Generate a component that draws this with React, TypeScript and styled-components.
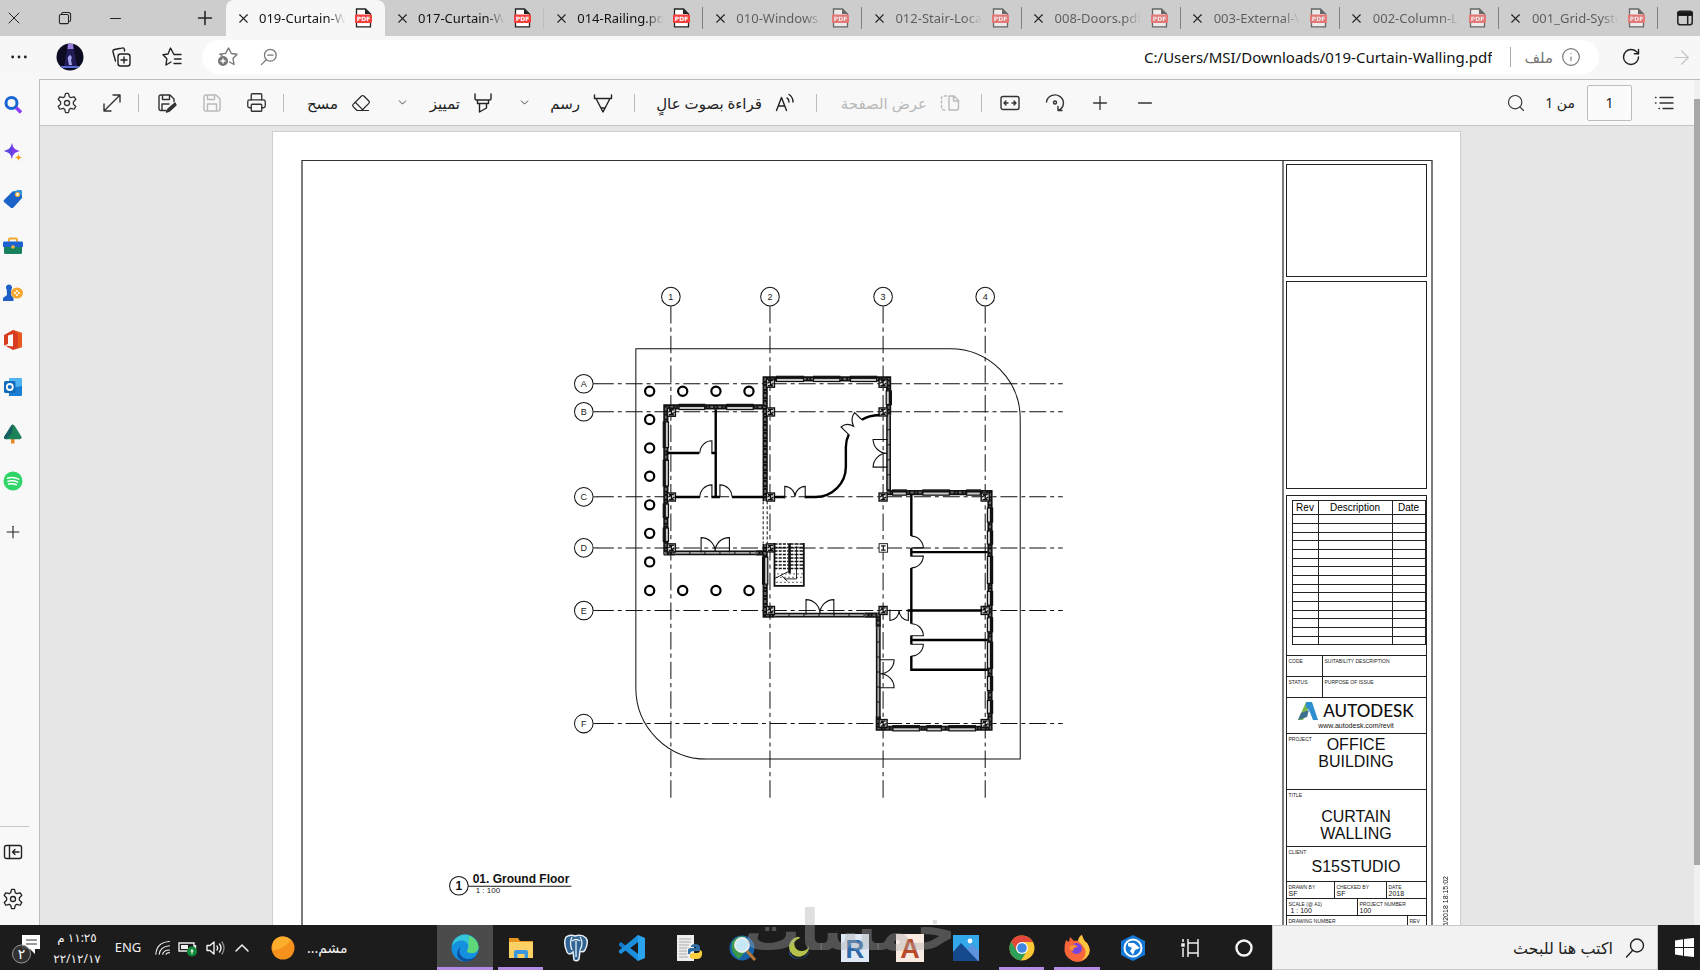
import React from "react";
import styled, { createGlobalStyle, css } from "styled-components";
import { X, Minus, Plus, Printer, Eraser, ChevronDown, ChevronUp, Search, Info, RotateCw, ArrowRight } from "lucide-react";

const GlobalStyle = createGlobalStyle`
  * { box-sizing: border-box; }
  body {
    margin: 0;
    overflow: hidden;
    background: #f7f7f7;
    font-family: "Noto Sans", "DejaVu Sans", sans-serif;
    color: #222;
  }
  button, input { font: inherit; color: inherit; }
  button { border: 0; padding: 0; background: none; }
`;

const Shell = styled.div`
  display: flex;
  flex-direction: column;
  height: 100vh;
  position: relative;
`;

/* ---------- tab strip ---------- */

const TabStrip = styled.header`
  display: flex;
  flex: none;
  height: 36px;
  background: #cdcdcd;
`;

const WindowControls = styled.div`
  display: flex;
  align-items: center;
  width: 226px;
  padding-right: 1px;
  overflow: hidden;
`;

const ControlButton = styled.button<{ $push?: boolean; $first?: boolean }>`
  display: grid;
  place-items: center;
  width: ${(p) => (p.$push ? 40 : 51)}px;
  height: 34px;
  flex: none;
  margin-left: ${(p) => (p.$push ? "auto" : p.$first ? "-12px" : "0")};
`;

const Tabs = styled.div`
  display: flex;
  flex: 1;
  min-width: 0;
`;

const Tab = styled.div<{ $active?: boolean; $asleep?: boolean; $divider?: "light" | "dark" }>`
  position: relative;
  display: flex;
  flex: 1;
  align-items: center;
  min-width: 0;
  padding: 0 13px 0 9px;
  gap: 8px;
  background: ${(p) => (p.$active ? "#f7f7f7" : "transparent")};
  border-radius: 8px 8px 0 0;
  ${(p) =>
    p.$divider &&
    css`
      &::after {
        content: "";
        position: absolute;
        right: 0;
        top: 7px;
        height: 22px;
        width: 1px;
        background: ${p.$divider === "dark" ? "#808080" : "#bdbdbd"};
      }
    `}
  span, svg.pdf { opacity: ${(p) => (p.$asleep ? 0.6 : 1)}; }
`;

const TabClose = styled.button`
  display: grid;
  place-items: center;
  width: 16px;
  height: 16px;
  flex: none;
`;

const TabLabel = styled.span`
  flex: 1;
  min-width: 0;
  overflow: hidden;
  white-space: nowrap;
  font-size: 13px;
  line-height: 20px;
  color: #111;
  mask-image: linear-gradient(90deg, #000 78%, transparent 98%);
`;

const TabMenu = styled.button`
  display: grid;
  place-items: center;
  width: 42px;
  padding-left: 12px;
`;

/* ---------- address bar ---------- */

const AddressRow = styled.div`
  display: flex;
  flex: none;
  align-items: center;
  height: 43px;
  padding-bottom: 1px;
  background: #f7f7f7;
`;

const AddressTools = styled.div<{ $width: number; $pull?: boolean }>`
  display: flex;
  flex: none;
  width: ${(p) => p.$width}px;
  padding-left: ${(p) => (p.$pull ? 0 : 6)}px;
  overflow: hidden;
  & > :first-child { margin-left: ${(p) => (p.$pull ? "-7px" : "0")}; }
`;

const AddressButton = styled.button<{ $faded?: boolean }>`
  display: grid;
  place-items: center;
  width: 51px;
  height: 34px;
  flex: none;
  color: ${(p) => (p.$faded ? "#c6c6c6" : "#222")};
`;

const AddressField = styled.div`
  display: flex;
  flex: 1;
  align-items: center;
  height: 34px;
  padding: 0 18px 0 12px;
  border-radius: 17px;
  background: #fff;
  color: #777;
`;

const FieldButton = styled.button`
  display: grid;
  place-items: center;
  width: 28px;
  height: 28px;
  margin-right: 13px;
`;

const UrlInput = styled.input`
  flex: 1;
  min-width: 0;
  border: 0;
  outline: 0;
  background: none;
  text-align: right;
  font-size: 15px;
  color: #111;
`;

const SchemeLabel = styled.span`
  display: flex;
  align-items: center;
  gap: 8px;
  margin-left: 16px;
  padding-left: 13px;
  border-left: 1px solid #aaa;
  font-size: 15px;
  line-height: 19px;
`;

/* ---------- body ---------- */

const Main = styled.div`
  display: flex;
  flex: 1;
  min-height: 0;
`;

const Sidebar = styled.nav`
  display: flex;
  flex: none;
  flex-direction: column;
  width: 39px;
  padding: 2px 0 3px;
  background: #f8f8f8;
`;

const SideButton = styled.button<{ $apart?: boolean }>`
  display: grid;
  place-items: center;
  width: 26px;
  height: 47px;
  flex: none;
  margin-top: ${(p) => (p.$apart ? 4 : 0)}px;
`;

const SideRule = styled.hr`
  width: 29px;
  margin: auto 0 1px;
  border: 0;
  border-top: 1px solid #c8c8c8;
`;

const Reader = styled.main`
  display: flex;
  flex: 1;
  min-width: 0;
  border: solid #bdbdbd;
  border-width: 1px 0 0 1px;
`;

const ReaderColumn = styled.div`
  display: flex;
  flex: 1;
  flex-direction: column;
  min-width: 0;
`;

const Toolbar = styled.div`
  display: flex;
  flex: none;
  align-items: center;
  height: 46px;
  padding: 0 8px 0 4px;
  border-bottom: 1px solid #c4c4c4;
  background: #f8f8f8;
`;

const ToolButton = styled.button<{ $faded?: boolean; $slim?: boolean }>`
  display: grid;
  place-items: center;
  width: ${(p) => (p.$slim ? 29 : 45)}px;
  height: 36px;
  flex: none;
  color: ${(p) => (p.$faded ? "#b9b9b9" : "#333")};
`;

const LabelTool = styled.button<{ $width: number; $faded?: boolean }>`
  display: flex;
  align-items: center;
  justify-content: flex-end;
  gap: 13px;
  width: ${(p) => p.$width}px;
  height: 36px;
  padding-right: 17px;
  flex: none;
  white-space: nowrap;
  font-size: 15px;
  color: ${(p) => (p.$faded ? "#b9b9b9" : "#222")};
`;

const ToolRule = styled.span`
  flex: none;
  width: 1px;
  height: 18px;
  margin: 0 5px 0 4px;
  background: #bcbcbc;
`;

const Spacer = styled.span`
  flex: 1;
`;

const PageCount = styled.label`
  display: flex;
  align-items: center;
  gap: 12px;
  margin: 0 9px 0 15px;
  font-size: 14px;
`;

const PageInput = styled.input`
  width: 45px;
  height: 36px;
  border: 1px solid #bdbdbd;
  border-radius: 2px;
  background: #fbfbfb;
  text-align: center;
`;

const Desk = styled.div`
  display: flex;
  flex: 1;
  justify-content: center;
  align-items: flex-start;
  min-height: 0;
  overflow: hidden;
  padding: 5px 2px 0 0;
  background: #e6e6e6;
`;

const ScrollTrack = styled.div`
  flex: none;
  width: 6px;
  padding-top: 19px;
  background: #f0f0f0;
`;

const ScrollThumb = styled.div`
  height: calc(100% - 60px);
  background: #a8a8a8;
`;

/* ---------- drawing sheet ---------- */

const Sheet = styled.article`
  display: flex;
  flex: none;
  width: 1189px;
  padding: 28px 0 28px 28px;
  border: 1px solid #cfcfcf;
  background: #fff;
  font-family: "Liberation Sans", Arial, sans-serif;
  color: #111;
`;

const Frame = styled.div`
  display: flex;
  flex: 1;
  border: 2px solid #7c7c7c;
  border-top: 1px solid #333;
`;

const PlanArea = styled.div`
  flex: 1;
  border-right: 2px solid #7c7c7c;
`;

const PlanSvg = styled.svg`
  display: block;
  width: 100%;
`;

const PrintStamp = styled.div`
  width: 27px;
  padding: 716px 0 0 9px;
  font-size: 7px;
  line-height: 8px;
  writing-mode: vertical-lr;
  white-space: nowrap;
  span { display: inline-block; transform: rotate(180deg); }
`;

const TitleBlock = styled.aside`
  display: flex;
  flex-direction: column;
  gap: 4px;
  width: 147px;
  padding: 3px 4px 3px 2px;
`;

const BlankBox = styled.div<{ $height: number }>`
  height: ${(p) => p.$height}px;
  border: 1px solid #222;
`;

const InfoBox = styled.div`
  margin-top: 2px;
  border: 1px solid #222;
`;

const RevTable = styled.table`
  width: 133px;
  margin: 4px 0 10px 5px;
  border-collapse: collapse;
  table-layout: fixed;
  font-size: 10px;
  line-height: 12px;
  th, td { padding: 0; border: 1px solid #222; }
  th { font-weight: 400; height: 14px; color: #000; }
  td { height: 9px; }
  tr:nth-child(3n) td { height: 8px; }
`;

const RevCol = styled.col<{ $width: number }>`
  width: ${(p) => p.$width}px;
`;

const BlockRow = styled.div<{ $height: number }>`
  display: flex;
  height: ${(p) => p.$height}px;
  border-top: 1px solid #222;
`;

const Cell = styled.div<{ $width?: number }>`
  ${(p) => (p.$width ? css`width: ${p.$width}px; flex: none;` : css`flex: 1;`)}
  padding: 2px 0 0 2px;
  font-size: 7px;
  line-height: 8px;
  & + & { border-left: 1px solid #222; }
`;

const Caption = styled.div`
  font-size: 5px;
  line-height: 6px;
  white-space: nowrap;
  color: #222;
`;

const BigText = styled.div<{ $drop?: number }>`
  margin-top: ${(p) => p.$drop ?? 0}px;
  padding-right: 2px;
  text-align: center;
  font-size: 16px;
  line-height: 17px;
`;

const Brand = styled.div`
  flex: 1;
  text-align: center;
  font-size: 7px;
  line-height: 9px;
`;

const BrandName = styled.div`
  display: flex;
  align-items: center;
  justify-content: center;
  gap: 5px;
  height: 23px;
  padding-top: 1px;
  font-family: Lato, sans-serif;
  font-size: 17px;
  font-weight: 500;
`;

/* ---------- taskbar ---------- */

const Taskbar = styled.footer`
  display: flex;
  flex: none;
  height: 45px;
  background: #1c1c1c;
  color: #f2f2f2;
`;

const Tray = styled.div`
  display: flex;
  align-items: center;
  width: 437px;
  padding-left: 6px;
`;

const TrayButton = styled.button<{ $width: number; $small?: boolean }>`
  display: grid;
  place-items: center;
  width: ${(p) => p.$width}px;
  height: 45px;
  flex: none;
  font-size: ${(p) => (p.$small ? 12 : 13)}px;
  line-height: 21px;
  white-space: nowrap;
`;

const Weather = styled.button`
  display: flex;
  align-items: center;
  gap: 12px;
  margin-left: 16px;
  font-size: 14px;
`;

const Apps = styled.div`
  display: flex;
  flex: 1;
`;

const AppButton = styled.button<{ $state?: "front" | "open" }>`
  position: relative;
  display: grid;
  place-items: center;
  flex: 1;
  background: ${(p) => (p.$state === "front" ? "#4b4b4b" : "none")};
  ${(p) =>
    p.$state &&
    css`
      &::after {
        content: "";
        position: absolute;
        bottom: 0;
        left: ${p.$state === "front" ? 0 : 5}px;
        right: ${p.$state === "front" ? 0 : 5}px;
        height: 3px;
        background: #b48be6;
      }
    `}
`;

const SearchBox = styled.label`
  display: flex;
  align-items: center;
  gap: 10px;
  width: 386px;
  padding-right: 12px;
  background: #f2f2f2;
  border: 1px solid #c8c8c8;
  color: #222;
`;

const SearchInput = styled.input`
  flex: 1;
  min-width: 0;
  border: 0;
  outline: 0;
  background: none;
  font-size: 16px;
  &::placeholder { color: #222; opacity: 1; }
`;

const StartButton = styled.button`
  display: grid;
  place-items: center;
  width: 42px;
  padding-left: 10px;
`;

const Watermark = styled.div`
  position: absolute;
  left: 50%;
  bottom: 6px;
  transform: translateX(-50%);
  font-family: "DejaVu Sans", sans-serif;
  font-size: 56px;
  font-weight: 700;
  line-height: 66px;
  color: rgba(170, 170, 170, 0.38);
  pointer-events: none;
  white-space: nowrap;
`;

/* ---------- icons ---------- */

type GlyphProps = { size?: number; width?: number; children: React.ReactNode };
const Glyph = ({ size = 20, width = 1.4, children }: GlyphProps) => (
  <svg width={size} height={size} viewBox="0 0 20 20" fill="none" stroke="currentColor" strokeWidth={width} strokeLinecap="round" strokeLinejoin="round">
    {children}
  </svg>
);

const GearIcon = () => (
  <Glyph size={22} width={1.2}>
    <path d="M8.3 2.6 8.7 1.3h2.6l.4 1.3.4 1.7 1.4.8 1.8-.5 1.3-.2 1.4 2.3-1 1-1.2 1.3v2l1.2 1.2 1 1-1.4 2.4-1.3-.3-1.8-.5-1.4.9-.4 1.7-.4 1.3H8.7l-.4-1.3-.4-1.7-1.4-.9-1.8.5-1.3.3L2 13.2l1-1L4.2 11V9L3 7.7l-1-1 1.4-2.3 1.3.2 1.8.5 1.4-.8Z" />
    <circle cx="10" cy="10" r="2.3" />
  </Glyph>
);

const PdfIcon = () => (
  <svg className="pdf" width="17" height="20" viewBox="0 0 17 20">
    <path d="M1.5 1h9l5 5v12.8h-14Z" fill="#fff" stroke="#222" strokeWidth="1.3" />
    <path d="M10 1v5h5.5Z" fill="#222" />
    <rect x="0" y="6.5" width="17" height="8.5" rx="1" fill="#f2403d" />
    <text x="8.5" y="13" textAnchor="middle" fontFamily="DejaVu Sans" fontSize="6" fontWeight="700" fill="#fff">PDF</text>
  </svg>
);

const sideIcons: [string, React.ReactNode][] = [
  ["Search", <><circle cx="8.5" cy="8" r="5.5" fill="none" stroke="#1766d6" strokeWidth="3" /><path d="m13 12.5 5 5" stroke="#8b3ff0" strokeWidth="3.6" /></>],
  ["Discover", <><path d="M9 1c1 5 2.5 6.5 8 8-5.5 1.5-7 3-8 8-1-5-2.5-6.5-8-8 5.5-1.5 7-3 8-8Z" fill="#7c3aed" /><path d="M9 1c-1 5-2.5 6.5-8 8 5.5 1.5 7 3 8 8Z" fill="#5b46e0" /><path d="M15.5 12c.5 2.3 1.2 3 3.5 3.5-2.3.5-3 1.2-3.5 3.5-.5-2.3-1.2-3-3.5-3.5 2.3-.5 3-1.2 3.5-3.5Z" fill="#f59e0b" /></>],
  ["Shopping", <><path d="m1 11 8.5-8.5 8-1.5 1.5 1v7l-8.5 9.5q-1.500 1-3 0L1 13q-1-1 0-2Z" fill="#1b62c9" /><path d="m9.5 2.5 8-1.5 1.5 1v5Z" fill="#2f93e0" /><circle cx="14.5" cy="5.5" r="2" fill="#fff" stroke="#e9a63a" strokeWidth="1.2" /></>],
  ["Tools", <><path d="M6 6V3.5q0-1 1-1h6q1 0 1 1V6" fill="none" stroke="#f0a72c" strokeWidth="1.8" /><rect x="1" y="9" width="18" height="9" rx="1.5" fill="#17805f" /><path d="M0 6.5q0-1 1-1h18q1 0 1 1V11H0Z" fill="#1c62d0" /><circle cx="10" cy="11" r="1.8" fill="#f6b73c" /></>],
  ["Games", <><path d="M6 1.5a3 3 0 0 1 2.3 5L8 12l2.5 3v3H0v-3l4-3-.3-5.500A3 3 0 0 1 6 1.5Z" fill="#1d5fc4" /><ellipse cx="14" cy="10" rx="6" ry="5.5" fill="#f6a62d" /><g fill="#fff"><circle cx="12" cy="10" r="1.1" /><circle cx="16" cy="10" r="1.1" /><circle cx="14" cy="8" r="1.1" /><circle cx="14" cy="12" r="1.1" /></g></>],
  ["Office", <><path d="m1 5 9-5 9 3v14l-9 3-8-4.5 8 1V4L5 5.5V14l-4 1.5Z" fill="#d83b1f" /><path d="M10 0 19 3v14l-4 1.5V4Z" fill="#e8591f" /></>],
  ["Outlook", <><rect x="6" y="1" width="13" height="17" rx="1" fill="#50b4f0" /><path d="m6 12 7-2 6-1v9q0 1-1 1H6Z" fill="#1a7fd4" /><rect x="1" y="4" width="11.5" height="12" rx="1.5" fill="#0f6cbd" /><circle cx="6.8" cy="10" r="3" fill="none" stroke="#fff" strokeWidth="1.8" /></>],
  ["Tree", <><rect x="8" y="14" width="3.5" height="5.5" fill="#e98a23" /><path d="M9.8.5q1 0 2 1.5l6.5 10.5q1 2.500-2 2.8H3.3q-3-.3-2-2.8L8 2q.8-1.5 1.8-1.5Z" fill="#1c8257" /><path d="M9.8.5q-1 0-1.8 1.5L1.3 12.5q-1 2.5 2 2.8L9 9Z" fill="#175f62" /></>],
  ["Music", <><circle cx="10" cy="10" r="9.5" fill="#2fd566" /><path d="M4.5 7.2q6-1.6 11.2 1M5 10.2q5-1.3 9.7.9M5.5 13q4-1 8 .8" fill="none" stroke="#fff" strokeWidth="1.5" strokeLinecap="round" /></>],
];

const appIcons: { name: string; state?: "front" | "open"; art: React.ReactNode }[] = [
  { name: "Edge", state: "front", art: <><circle cx="14" cy="14" r="13.5" fill="#1490df" /><path d="M2 8A13.5 13.5 0 0 1 27.5 13c0 4-3 6-7 6-3 0-4.5-1-4.5-2s1.5-1.5 1.5-4C17.5 9 14 6.5 10 6.5 6 6.5 3 9 .8 12Z" fill="#34c6d8" /><path d="M18 2q9 3 9.5 11c0 4-3 6-7 6-3 0-4.5-1-4.5-2s1.5-1.5 1.5-4Z" fill="#5fd879" /><path d="M10 13c-4 5 0 12 7 12 4 0 6-1.500 8.500-3.500C22 28 13 29.500 8 24.500 5 21 6 15.500 10 13Z" fill="#0c4f9f" /></> },
  { name: "Files", state: "open", art: <><path d="M2 4h9l2 3h13v5H2Z" fill="#e8951f" /><path d="M2 8h24v16H2Z" fill="#fbd065" /><path d="M7 24v-6q0-2 2-2h10q2 0 2 2v6h-3.5v-4h-7v4Z" fill="#3a97e0" /></> },
  { name: "Database", art: <><path d="M4 3q4-3 9-1 7-2 11 2 3 4-1 12-2 3-5 1l-1 8q-2 3-5 1l-1-8q-4 4-6 0Q1 9 4 3Z" fill="#2f6493" stroke="#e8eef4" strokeWidth="1.5" /><path d="M10 3q-3 6 0 13M18 3q4 6 0 13M10 7q4-3 8 0M14 7v16" fill="none" stroke="#e8eef4" strokeWidth="1.3" /></> },
  { name: "Code", art: <><path d="M20 1 27 4v20l-7 3Z" fill="#2aa4ee" /><path d="M20 1 8 12 3 8 1 9.5v2L20 27v-7L12 14l8-6Z" fill="#1177c8" /><path d="M20 27 8 16l-5 4-2-1.5v-2L20 1v7l-8 6 8 6Z" fill="#1c8fdc" /></> },
  { name: "Python", art: <><path d="M3 1h17v26H3Z" fill="#ededed" /><path d="M5 5h12M5 8h12M5 11h10M5 14h8M5 17h8M5 20h8M5 23h9" stroke="#aaa" /><path d="M21 10q5 0 5 4v3h-6q-4 0-4 3h-2v-4q0-2 3-2h5v-1h-5q0-3 4-3Z" fill="#2d6ea5" /><path d="M20 25q-5 0-4-4 0-2 3-2h4q3 0 3-3 3 1 2 5t-5 4Z" fill="#fbcf3c" /></> },
  { name: "Finder", art: <><circle cx="13" cy="14" r="12.5" fill="#1762a8" /><path d="M3 8q6-8 14-5l-3 5 4 8-8 9Q1 20 3 8Z" fill="#3c9a4c" /><circle cx="13" cy="11" r="7" fill="#c6e8f5" stroke="#ececec" strokeWidth="1.8" /><path d="m18 17 8 9" stroke="#b87736" strokeWidth="3" /></> },
  { name: "Crescent", art: <><path d="M4 15a10 10 0 0 0 20-1v4A11 10 0 0 1 4 20Z" fill="#1d4e8a" /><path d="M12 3A10 10 0 1 0 24 12 7.5 7 0 0 1 10 13Q7 7 15 4 14 2 12 3Z" fill="#b4c24c" /></> },
  { name: "Revit", art: <><rect x="0" y="0" width="28" height="28" fill="#dfe9f5" /><text x="14" y="23.5" textAnchor="middle" fontFamily="Liberation Sans" fontSize="26" fontWeight="700" fill="#2f69a9">R</text></> },
  { name: "AutoCAD", art: <><rect x="0" y="0" width="28" height="28" fill="#f9ebe2" /><text x="14" y="23.5" textAnchor="middle" fontFamily="Liberation Sans" fontSize="27" fontWeight="700" fill="#b84a2c">A</text></> },
  { name: "Photos", art: <><rect x="1" y="1" width="26" height="26" fill="#33a9ec" /><path d="m14 16 6-6 7 7v10H14Z" fill="#5d93dc" /><path d="M1 18 9 9l17 18H1Z" fill="#174a8c" /><circle cx="18" cy="7" r="2.4" fill="#fff" /></> },
  { name: "Chrome", state: "open", art: <><circle cx="14" cy="14" r="12.5" fill="#fbc734" /><path d="M3.2 7.8A12.5 12.5 0 0 1 25 8H14l-5.5 9Z" fill="#e4483a" /><path d="M3.2 7.8A12.5 12.5 0 0 0 13 26.5l6-9.5-10 .5Z" fill="#2d9f56" /><circle cx="14" cy="14" r="6" fill="#fff" /><circle cx="14" cy="14" r="4.8" fill="#4186e0" /></> },
  { name: "Firefox", state: "open", art: <><path d="M3 6l3 2 1-5 4 4q2-1 4 0 1-5 4-6 1 5 5 8 4 6 2 11-4 8-12 8Q3 26 1.5 17 1 11 3 6Z" fill="#f7653b" /><path d="M19 1q1 5 5 8 4 6 2 11-3 5-8 7 6-5 4-12-3-5-7-8 1-5 4-6Z" fill="#fcc53d" /><circle cx="13.5" cy="14.5" r="5.5" fill="#7a45d8" /><path d="M6 13q5-5 9 0-5 0-5 4-3 0-4-4Z" fill="#f98f33" /></> },
  { name: "Globe", art: <><path d="m14 1 12 6v14l-12 6-12-6V7Z" fill="#1378d6" /><circle cx="14" cy="14" r="8.5" fill="none" stroke="#fff" strokeWidth="2" /><path d="M9 9h6l6 5-5 2-2 5-3-4 2-3-4-2Z" fill="#fff" /></> },
  { name: "Task view", art: <g transform="translate(3 0)" fill="none" stroke="#eee" strokeWidth="1.5"><path d="M5 5v3M5 14v9M10 5v4h10V5M10 23v-4h10v4M10 9v10M20 9v10" /><rect x="4" y="10" width="2" height="2" fill="#eee" /></g> },
  { name: "Cortana", art: <circle cx="14" cy="14" r="7.5" fill="none" stroke="#f5f5f5" strokeWidth="2.4" /> },
];

/* ---------- floor plan ---------- */

const gridCols: [string, number][] = [["1", 670.5], ["2", 769.5], ["3", 882.5], ["4", 984.5]];
const gridRows: [string, number][] = [["A", 383.5], ["B", 411.5], ["C", 496.5], ["D", 547.5], ["E", 610], ["F", 723]];
const pillars: [number, number][] = [
  ...[649.3, 682.3, 715.5, 748.5].flatMap((x): [number, number][] => [[x, 391], [x, 590]]),
  ...[419.3, 447.7, 476, 504.5, 533, 561.5].map((y): [number, number] => [649.3, y]),
];
const posts: [number, number][] = [
  [671, 412], [671, 496.7], [671, 547.5],
  [770, 383], [770, 411.7], [770, 496.7], [770, 547.5], [770, 610],
  [882.5, 383], [882.5, 411.7], [882.5, 496.7], [882.5, 610], [882.5, 723],
  [984.5, 496.7], [984.5, 610], [984.5, 723],
];
const windowsAcross: [number, number, number][] = [
  [678.7, 704.3, 406.7], [726.3, 752.7, 406.7],
  [776, 803, 378.7], [813, 839.3, 378.7], [850, 876, 378.7],
  [892, 905.7, 492.2], [922.3, 948.7, 492.2], [966, 979.7, 492.2],
  [892.3, 918.7, 727.7], [926.3, 940.7, 727.7], [948.3, 974.7, 727.7],
];
const windowsDown: [number, number, number][] = [
  [665.5, 421.7, 447.3], [665.5, 460, 485.7], [665.5, 503.7, 517], [665.5, 527.7, 541],
  [764.7, 556.7, 583.7], [888.2, 390.7, 404.3],
  [989.3, 507.7, 521.7], [989.3, 530.7, 543.7], [989.3, 556, 583], [989.3, 591, 604.7], [989.3, 617.3, 631.3],
  [989.3, 641.7, 667.7], [989.3, 676, 690], [989.3, 700, 712.7],
];
const mass =
  "M665.5 554.3V406.7H764.7M764.7 500.7V378.7H888V415M886 492.2H989.3V727.7H877.7V716M764.7 543.5V614.7H774M864 614.7H879.7M877.7 612.7V627M663.5 552.5H675M755 552.5H765";
const curtain = "M675 552.5H755M774 614.7H864M888 415V490M877.7 627V717";

const GroundFloor = () => (
  <PlanSvg viewBox="303 161 978 792" fill="none" stroke="#111" role="img" aria-label="Ground floor plan">
    <path d="M635.5 348.5H949.5A70 70 0 0 1 1019.5 418.5V758.5H706.5A71 71 0 0 1 635.5 687.5Z" />

    {gridCols.map(([name, x]) => (
      <g key={name}>
        <path d={`M${x} 306V801`} strokeDasharray="17.4 4 4.2 4" />
        <circle cx={x} cy="296.5" r="9.3" />
        <text x={x} y="299.7" textAnchor="middle" fontSize="9" fill="#222" stroke="none">{name}</text>
      </g>
    ))}
    {gridRows.map(([name, y]) => (
      <g key={name}>
        <path d={`M593 ${y}h4`} />
        <path d={`M596.5 ${y}H1062`} strokeDasharray="17 3.9 4 3.9" />
        <circle cx="583.5" cy={y} r="9.3" />
        <text x="583.5" y={y + 3.2} textAnchor="middle" fontSize="9" fill="#222" stroke="none">{name}</text>
      </g>
    ))}

    {pillars.map(([x, y]) => <circle key={`${x}-${y}`} cx={x} cy={y} r="4.6" strokeWidth="2.2" stroke="#000" fill="#fff" />)}

    <path d={mass} strokeWidth="5.2" />
    <path d={mass} strokeWidth="2" stroke="#666" strokeDasharray="3 2 1 2" />
    <path d={curtain} strokeWidth="4.8" />
    <path d={curtain} strokeWidth="1.8" stroke="#aaa" strokeDasharray="14 1" />
    {windowsAcross.map(([a, b, y]) => (
      <g key={`${a}-${y}`}>
        <rect x={a} y={y - 2.6} width={b - a} height="5.2" strokeWidth="1.2" fill="#ccc" />
        <path d={`M${a} ${y - 1.2}H${b}`} strokeWidth="2.4" />
      </g>
    ))}
    {windowsDown.map(([x, a, b]) => {
      const side = x > 800 ? 1.2 : -1.2;
      return (
        <g key={`${x}-${a}`}>
          <rect x={x - 2.6} y={a} width="5.2" height={b - a} strokeWidth="1.2" fill="#ccc" />
          <path d={`M${x + side} ${a}V${b}`} strokeWidth="2.4" />
        </g>
      );
    })}

    {posts.map(([x, y]) => (
      <g key={`${x}-${y}`}>
        <rect x={x - 4} y={y - 4} width="8" height="8" fill="#ddd" strokeWidth="1.4" />
        <path d={`M${x - 2.5} ${y - 2.5}h5M${x - 2.5} ${y + 2.5}h5M${x} ${y - 2.5}v5M${x - 3} ${y}l3-2M${x} ${y + 2}l3-2`} strokeWidth="1.3" />
      </g>
    ))}
    <rect x="878.5" y="543.3" width="8.5" height="8.5" strokeWidth="0.9" fill="#fff" />
    <path d="M880.5 545.5h4.5M880.5 549.7h4.5M882.7 545.5v4" strokeWidth="1.2" />

    <g strokeWidth="2.4" stroke="#000">
      <path d="M715.3 409V497M667 452.7H699M711 452.7H715M675 496.7H699.5M711 496.7H719.5M731.5 496.7H763M774 496.7H784.5" />
      <path d="M804.5 496.7H815A30.3 30.3 0 0 0 845.3 466.4V447Q845.3 440 848.3 434M861.3 419.5Q868 415 879 414.7" />
      <path d="M910.7 494V535.7M910.7 547.5V556M910.7 551.7H987M910.7 567.5V623.3M907 610H981M910.7 635V644M910.7 639.5H987M910.7 655.5V669.3H987" />
    </g>

    <g strokeWidth="1.1">
      <path d="M699.5 452.5A12 12 0 0 1 711.5 440.5V452.5M699.5 496.5A12 12 0 0 1 711.5 484.5V496.5M719.5 496.5V484.5A12 12 0 0 1 731.5 496.5" />
      <path d="M784.3 498V486A10.5 10.5 0 0 1 794.5 496.5A10.5 10.5 0 0 1 804.7 486V498" />
      <path d="M848 434 840.5 426.7Q846 422 853 426Q849.5 418 854 412.3L861.3 419.5" />
      <path d="M887 439.2H872.5A14 14 0 0 0 886.5 453A14 14 0 0 0 872.5 466.8H887" />
      <path d="M700.7 552V537.2A14 14 0 0 1 714.7 551A14 14 0 0 1 729 537.2V552" />
      <path d="M805.5 614V599.2A14 14 0 0 1 819.4 613A14 14 0 0 1 833.3 599.2V614" />
      <path d="M889.3 609V620A10 10 0 0 0 898.5 610A10 10 0 0 0 907.7 620V609" />
      <path d="M910.7 535.7A12 12 0 0 1 922.7 547.5H910.7M910.7 555.7H922.7A12 12 0 0 1 910.7 567.5" />
      <path d="M910.7 623.3A12 12 0 0 1 922.7 635.2H910.7M910.7 643.7H922.7A12 12 0 0 1 910.7 655.5" />
      <path d="M879 659.2H893.5A14 14 0 0 1 879.5 673.2A14 14 0 0 1 893.5 687.2H879" />
    </g>

    <path d="M762.7 501V543M766.7 501V543" strokeDasharray="3 2" />

    <path d="M774 542.5V585.5H803.3V542.5" strokeWidth="1.8" />
    {[543.5, 547, 550.5, 554, 557.5, 561, 564.5, 568].map((y) => (
      <g key={y} strokeWidth="1.5">
        <path d={`M774 ${y}H788`} strokeDasharray="3 1.2" />
        <path d={`M789 ${y}H803`} strokeDasharray="4 1" />
      </g>
    ))}
    <path d="M789 543V573" strokeWidth="2.6" />
    <path d="M796 546V578.5H784M774.5 578 788 571M781 575l6 6" strokeWidth="0.9" />
    <path d="M776 582H802M777 573.5H802M776 577H801" strokeDasharray="1 3" strokeWidth="1.2" />

    <circle cx="458.7" cy="885" r="9.3" />
    <text x="458.7" y="889.2" textAnchor="middle" fontSize="12" fontWeight="700" fill="#111" stroke="none">1</text>
    <path d="M468 885.5H571" />
    <text x="472.5" y="882" fontSize="12" fontWeight="700" fill="#111" stroke="none">01. Ground Floor</text>
    <text x="475.5" y="892" fontSize="8" fill="#222" stroke="none">1 : 100</text>
  </PlanSvg>
);

const TitlePanel = () => (
  <TitleBlock>
    <BlankBox $height={113} />
    <BlankBox $height={208} />
    <InfoBox>
      <RevTable>
        <colgroup><RevCol $width={26} /><RevCol $width={74} /><RevCol $width={33} /></colgroup>
        <thead><tr><th>Rev</th><th>Description</th><th>Date</th></tr></thead>
        <tbody>
          {Array.from({ length: 15 }, (_, i) => <tr key={i}><td /><td /><td /></tr>)}
        </tbody>
      </RevTable>
      <BlockRow $height={21}>
        <Cell $width={35}><Caption>CODE</Caption></Cell>
        <Cell><Caption>SUITABILITY DESCRIPTION</Caption></Cell>
      </BlockRow>
      <BlockRow $height={21}>
        <Cell $width={35}><Caption>STATUS</Caption></Cell>
        <Cell><Caption>PURPOSE OF ISSUE</Caption></Cell>
      </BlockRow>
      <BlockRow $height={36}>
        <Brand>
          <BrandName>
            <svg width="20" height="19" viewBox="0 0 20 19">
              <path d="M0 19 8 1l3 4-3 8-3 6Z" fill="#7ab648" />
              <path d="M0 19 3 12l8-3-2 7Z" fill="#3f6f8f" />
              <path d="M8 1h6l6 18h-5L11 9 8 6Z" fill="#2d8fd0" />
            </svg>
            AUTODESK
          </BrandName>
          www.autodesk.com/revit
        </Brand>
      </BlockRow>
      <BlockRow $height={56}>
        <Cell><Caption>PROJECT</Caption><BigText $drop={-6}>OFFICE<br />BUILDING</BigText></Cell>
      </BlockRow>
      <BlockRow $height={57}>
        <Cell><Caption>TITLE</Caption><BigText $drop={10}>CURTAIN<br />WALLING</BigText></Cell>
      </BlockRow>
      <BlockRow $height={35}>
        <Cell><Caption>CLIENT</Caption><BigText $drop={3}>S15STUDIO</BigText></Cell>
      </BlockRow>
      <BlockRow $height={17}>
        <Cell $width={47}><Caption>DRAWN BY</Caption>SF</Cell>
        <Cell $width={52}><Caption>CHECKED BY</Caption>SF</Cell>
        <Cell><Caption>DATE</Caption>2018</Cell>
      </BlockRow>
      <BlockRow $height={17}>
        <Cell $width={70}><Caption>SCALE (@ A1)</Caption>&nbsp;1 : 100</Cell>
        <Cell><Caption>PROJECT NUMBER</Caption>100</Cell>
      </BlockRow>
      <BlockRow $height={30}>
        <Cell $width={120}><Caption>DRAWING NUMBER</Caption></Cell>
        <Cell><Caption>REV</Caption></Cell>
      </BlockRow>
    </InfoBox>
  </TitleBlock>
);

const tabs = [
  "019-Curtain-W", "017-Curtain-W", "014-Railing.pd", "010-Windows.", "012-Stair-Loca",
  "008-Doors.pdf", "003-External-V", "002-Column-L", "001_Grid-Syste",
];

export default function App() {
  return (
    <Shell>
      <GlobalStyle />
      <TabStrip>
        <WindowControls>
          <ControlButton $first aria-label="Close window"><X size={20} strokeWidth={1.2} /></ControlButton>
          <ControlButton aria-label="Restore window">
            <Glyph size={14} width={1.5}><rect x="2" y="5" width="13" height="13" rx="2" /><path d="M5 4.5Q5 2 7.5 2H15q3 0 3 3v8q0 2-2 2" /></Glyph>
          </ControlButton>
          <ControlButton aria-label="Minimise window"><Minus size={17} strokeWidth={1.5} /></ControlButton>
          <ControlButton $push aria-label="New tab"><Plus size={22} strokeWidth={1.7} /></ControlButton>
        </WindowControls>
        <Tabs role="tablist">
          {tabs.map((name, i) => (
            <Tab key={name} role="tab" aria-selected={i === 0} $active={i === 0} $asleep={i > 2} $divider={i > 1 ? "dark" : i === 1 ? "light" : undefined}>
              <TabClose aria-label={`Close ${name}`}><X size={15} strokeWidth={1.7} /></TabClose>
              <TabLabel>{name}</TabLabel>
              <PdfIcon />
            </Tab>
          ))}
        </Tabs>
        <TabMenu aria-label="Tab actions">
          <Glyph size={18} width={1.7}><rect x="2" y="2.5" width="16" height="15" rx="2.5" /><path d="M2 4h16v3H2Z" fill="#111" /><path d="M13 7v10" /></Glyph>
        </TabMenu>
      </TabStrip>

      <AddressRow>
        <AddressTools $width={202} $pull>
          <AddressButton aria-label="More"><Glyph size={18}><g fill="currentColor" stroke="none"><circle cx="3" cy="10" r="1.6" /><circle cx="10" cy="10" r="1.6" /><circle cx="17" cy="10" r="1.6" /></g></Glyph></AddressButton>
          <AddressButton aria-label="Profile">
            <svg width="28" height="28" viewBox="0 0 28 28">
              <circle cx="14" cy="14" r="13.5" fill="#0b0b22" />
              <path d="M12 1h5l4 22H8Z" fill="#3b2b8a" opacity=".5" /><path d="M12 1h5l.5 5h-6Z" fill="#9a7be0" />
              <path d="M14 12q3 2 1 5l1 5h-3l-1-5q-1-3 2-5Z" fill="#a9a4ee" /><path d="M4 23h20l-3 2H7Z" fill="#5a6bd8" />
            </svg>
          </AddressButton>
          <AddressButton aria-label="Collections"><Glyph><rect x="7" y="7" width="12" height="12" rx="2.5" /><path d="M13 10v6M10 13h6M4.5 14 2 5q-.5-2 1.5-2.5L11 1q2-.5 2.5 1.5V4" /></Glyph></AddressButton>
          <AddressButton aria-label="Favorites"><Glyph><path d="M12 7.5 8.5 1 6 7l-5 .8 3.8 4L4 18l5-3M12 7.5h7M12.5 12h6.5M12 16.5h7" /></Glyph></AddressButton>
        </AddressTools>
        <AddressField>
          <FieldButton aria-label="Add to favorites"><Glyph><path d="M4 8.5 1.8 7.2l5.7-.8L10.5 1l2.8 5.5 5.7.8-4 4.2 1 6L11.5 15" /><circle cx="5" cy="14" r="4.3" fill="currentColor" /><path d="M5 12v4M3 14h4" stroke="#fff" /></Glyph></FieldButton>
          <FieldButton aria-label="Zoom out"><Glyph size={18}><circle cx="11.5" cy="8" r="6.5" /><path d="M8.5 8h6M7 13l-5.5 5.5" /></Glyph></FieldButton>
          <UrlInput aria-label="Address" defaultValue="C:/Users/MSI/Downloads/019-Curtain-Walling.pdf" />
          <SchemeLabel dir="ltr"><span>ملف</span><Info size={20} strokeWidth={1.4} /></SchemeLabel>
        </AddressField>
        <AddressTools $width={101}>
          <AddressButton aria-label="Reload"><RotateCw size={20} strokeWidth={1.7} /></AddressButton>
          <AddressButton aria-label="Forward" $faded><ArrowRight size={23} strokeWidth={1.3} /></AddressButton>
        </AddressTools>
      </AddressRow>

      <Main>
        <Sidebar>
          {sideIcons.map(([name, art]) => (
            <SideButton key={name} aria-label={name}><svg width="20" height="20" viewBox="0 0 20 20">{art}</svg></SideButton>
          ))}
          <SideButton $apart aria-label="Add"><Plus size={20} strokeWidth={1.3} /></SideButton>
          <SideRule />
          <SideButton aria-label="Hide sidebar"><Glyph><rect x="1.5" y="3.5" width="17" height="13" rx="2" /><path d="M6.5 3.5v13M16 10H10M12 7.5 9.5 10l2.5 2.5" /></Glyph></SideButton>
          <SideButton aria-label="Sidebar settings"><GearIcon /></SideButton>
        </Sidebar>

        <Reader>
          <ReaderColumn>
            <Toolbar>
              <ToolButton aria-label="Settings"><GearIcon /></ToolButton>
              <ToolButton aria-label="Full screen"><Glyph><path d="M2 18 18 2M11 2h7v7M2 11v7h7" /></Glyph></ToolButton>
              <ToolRule />
              <ToolButton aria-label="Save as"><Glyph><path d="M9 17.5H4q-2 0-2-2V4q0-2 2-2h9l4 4v2.5M5.5 2v4.5h7V2M5 17v-6h7" /><path d="m18 10-7 6-1.5 3 3-1L19 12Z" fill="currentColor" /></Glyph></ToolButton>
              <ToolButton $faded aria-label="Save"><Glyph><path d="M4 2h10l4 4v10q0 2-2 2H4q-2 0-2-2V4q0-2 2-2ZM5.5 2v4.5h7V2M5.5 18v-7h9v7" /></Glyph></ToolButton>
              <ToolButton aria-label="Print"><Printer size={21} strokeWidth={1.5} /></ToolButton>
              <ToolRule />
              <LabelTool $width={99}><span>مسح</span><Eraser size={20} strokeWidth={1.4} /></LabelTool>
              <ToolButton $slim aria-label="Highlight colours"><ChevronDown size={13} strokeWidth={1.6} /></ToolButton>
              <LabelTool $width={93}><span>تمييز</span><Glyph><path d="M2 1v4.5q0 1.5 1.5 1.5h13q1.5 0 1.5-1.5V1M4.5 7v3.5h11V7M6.5 10.5V19l7-4v-4.5" /></Glyph></LabelTool>
              <ToolButton $slim aria-label="Pen colours"><ChevronDown size={13} strokeWidth={1.6} /></ToolButton>
              <LabelTool $width={91}><span>رسم</span><Glyph><path d="M1.5 2v3.5h17V2M3 5.5 10 19l7-13.5M8 15h4" /></Glyph></LabelTool>
              <ToolRule />
              <LabelTool $width={172}><span>قراءة بصوت عالٍ</span><Glyph><path d="m1.5 17.5 5-13 5 13M3.2 13h6.6M12 5q2 1 2 4M14 1.5q4 2.5 4 7.5" /></Glyph></LabelTool>
              <ToolRule />
              <LabelTool $width={155} $faded><span>عرض الصفحة</span><Glyph><path d="M9 3h5l4.5 4.5V15q0 2-2 2H9ZM13.5 3v5h5" /><path d="M6.5 3H4Q1.5 3 1.5 5.5V14q0 3 2.5 3h2.5" strokeDasharray="2 2.5" /></Glyph></LabelTool>
              <ToolRule />
              <ToolButton aria-label="Fit to width"><Glyph><rect x="1" y="3.5" width="18" height="13" rx="2" /><path d="M4.5 10H8M12 10h3.5M6 8l-2 2 2 2M14 8l2 2-2 2" /></Glyph></ToolButton>
              <ToolButton aria-label="Rotate"><Glyph><path d="M1.5 9a8.5 8 0 1 1 12.5 8M17 17.5h-4v-4" /><circle cx="10" cy="9.5" r="1.5" /></Glyph></ToolButton>
              <ToolButton aria-label="Zoom in"><Plus size={22} strokeWidth={1.4} /></ToolButton>
              <ToolButton aria-label="Zoom page out"><Minus size={22} strokeWidth={1.4} /></ToolButton>
              <Spacer />
              <ToolButton $slim aria-label="Find"><Search size={20} strokeWidth={1.4} /></ToolButton>
              <PageCount><span dir="rtl">من 1</span><PageInput aria-label="Page" defaultValue="1" /></PageCount>
              <ToolButton aria-label="Contents"><Glyph><path d="M6 4.5h13M6 10h13M9 15.5h10M1.5 4.5h.5M1.5 10h.5M5 15.5h.5" /></Glyph></ToolButton>
            </Toolbar>
            <Desk>
              <Sheet>
                <Frame>
                  <PlanArea><GroundFloor /></PlanArea>
                  <TitlePanel />
                </Frame>
                <PrintStamp><span>5/2018 18:15:02</span></PrintStamp>
              </Sheet>
            </Desk>
          </ReaderColumn>
          <ScrollTrack><ScrollThumb /></ScrollTrack>
        </Reader>
      </Main>

      <Taskbar>
        <Tray>
          <TrayButton $width={44} aria-label="Notifications">
            <svg width="32" height="34" viewBox="0 0 32 34">
              <path d="M10 4h18v14h-5v5l-5-5h-8Z" fill="#fff" /><path d="M14 9h11M14 13h11" stroke="#333" />
              <circle cx="9.5" cy="23" r="9" fill="#333" fillOpacity=".9" stroke="#999" />
              <text x="9.5" y="28" textAnchor="middle" fontSize="14" fill="#fff">٢</text>
            </svg>
          </TrayButton>
          <TrayButton $width={54} $small><span dir="rtl">١١:٢٥ م<br />٢٢/١٢/١٧</span></TrayButton>
          <TrayButton $width={48}>ENG</TrayButton>
          <TrayButton $width={22} aria-label="Network"><Glyph size={17} width={1.3}><path d="M1 18Q2 4 17 3M5 18Q6 9 17 8M9 18q1-5 8-5M13 18q1-2 4-2" /></Glyph></TrayButton>
          <TrayButton $width={28} aria-label="Battery">
            <svg width="20" height="20" viewBox="0 0 20 20"><path d="M1 5h15v8H1ZM17.5 7v4" fill="none" stroke="#eee" strokeWidth="1.4" /><path d="M3 7h7v4H3Z" fill="#eee" /><circle cx="14" cy="13.5" r="5" fill="#11893b" /><path d="M14 11v5M12.5 13h3" stroke="#fff" /></svg>
          </TrayButton>
          <TrayButton $width={26} aria-label="Volume"><Glyph><path d="M2 7.5h3L9 4v12l-4-3.5H2ZM12 8q1.5 2 0 4M14.5 6q3 4 0 8" /><path d="M17 4q4 6 0 12" opacity=".5" /></Glyph></TrayButton>
          <TrayButton $width={27} aria-label="Hidden icons"><ChevronUp size={24} strokeWidth={1.5} /></TrayButton>
          <Weather>
            <svg width="24" height="24" viewBox="0 0 24 24"><circle cx="12" cy="12" r="11.5" fill="#f5921e" /><path d="M2 6A11.5 11.5 0 0 1 20 4Q12 14 1 14Z" fill="#fbae2c" /></svg>
            <span dir="rtl">مشم...</span>
          </Weather>
        </Tray>
        <Apps>
          {appIcons.map(({ name, state, art }) => (
            <AppButton key={name} $state={state} aria-label={name}><svg width="28" height="28" viewBox="0 0 28 28">{art}</svg></AppButton>
          ))}
        </Apps>
        <SearchBox>
          <SearchInput dir="rtl" aria-label="Search" placeholder="اكتب هنا للبحث" />
          <Glyph><circle cx="12" cy="7.5" r="6.5" /><path d="m7.5 12.5-6 6.5" /></Glyph>
        </SearchBox>
        <StartButton aria-label="Start">
          <svg width="19" height="19" viewBox="0 0 19 19" fill="#fff"><path d="m0 2.5 8-1.2V9H0ZM9 1.1 19 0v9H9ZM0 10h8v7.7l-8-1.2ZM9 10h10v9L9 17.9Z" /></svg>
        </StartButton>
      </Taskbar>
      <Watermark>خمسات</Watermark>
    </Shell>
  );
}
